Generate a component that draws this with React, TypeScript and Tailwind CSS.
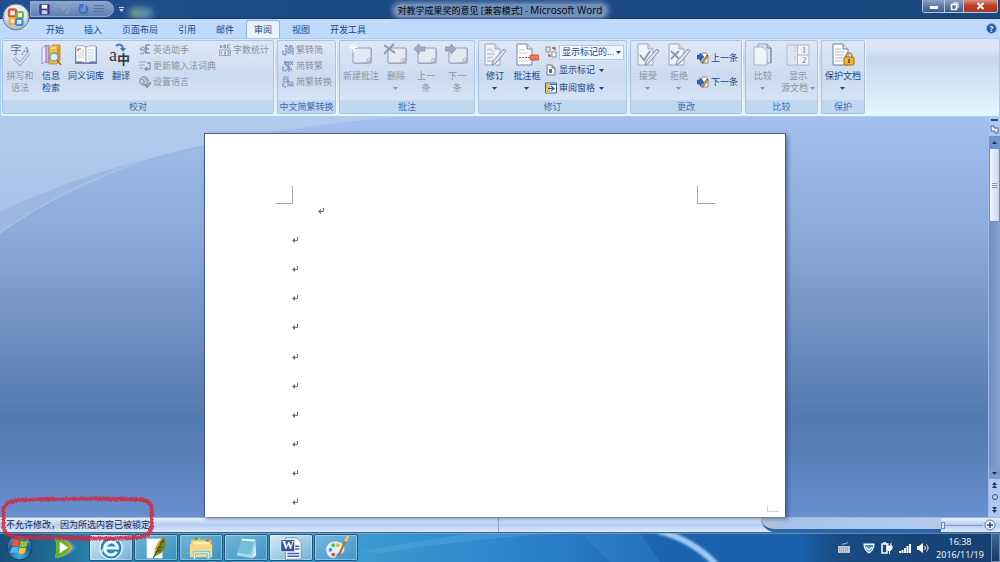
import { useState } from 'react';
import type { ReactNode } from 'react';

const TABS = ['开始', '插入', '页面布局', '引用', '邮件', '审阅', '视图', '开发工具'];

/* ---------- large ribbon icons, 24 x 24 ---------- */

const Icon24 = ({ children }: { children: ReactNode }) => (
  <svg viewBox="0 0 24 24" className="h-6 w-6 shrink-0" fill="none" aria-hidden="true">{children}</svg>
);

const Icon12 = ({ children }: { children: ReactNode }) => (
  <svg viewBox="0 0 12 12" className="h-3 w-3 shrink-0" fill="none" aria-hidden="true">{children}</svg>
);

const SpellingIcon = () => (
  <span className="relative flex h-6 w-6 items-start justify-center text-[#6f82a6]">
    <span className="text-[11px] leading-[13px] font-medium">字</span>
    <span className="font-['Liberation_Serif',serif] text-[13px] leading-[15px] italic">A</span>
    <svg viewBox="0 0 24 24" className="absolute inset-0" fill="none" aria-hidden="true">
      <path d="M6 15l6 6 9-11" stroke="#98a7c2" strokeWidth="3.5" />
      <path d="M6 15l6 6 9-11" stroke="#dfe6f1" strokeWidth="1.5" />
    </svg>
  </span>
);

const ResearchIcon = () => (
  <Icon24>
    <path d="M3 5l4-3v16l-4 3z" fill="#f3ecff" stroke="#8c7cb5" strokeWidth=".8" />
    <path d="M7 3l3-1v17l-3 1z" fill="#c8b8e6" stroke="#8c7cb5" strokeWidth=".8" />
    <path d="M10 5l4-3h7v15l-3 4h-8z" fill="#e9be3e" stroke="#a98317" strokeWidth=".8" />
    <path d="M18 5l3-3v15l-3 4z" fill="#c99a20" />
    <path d="M11 5h6" stroke="#fff1a8" />
    <circle cx="15" cy="14" r="4" fill="#d8efff" stroke="#8796aa" strokeWidth="1.3" />
    <path d="M18 17l4 5" stroke="#b06a34" strokeWidth="1.8" />
  </Icon24>
);

const ThesaurusIcon = () => (
  <Icon24>
    <path d="M1 4h22v17H1z" fill="#6d83aa" />
    <path d="M2 3c4-1 7 0 10 1v16c-3-1-6-2-10-1z" fill="#fff" stroke="#7b8eae" strokeWidth=".7" />
    <path d="M22 3c-4-1-7 0-10 1v16c3-1 6-2 10-1z" fill="#f5f8fc" stroke="#7b8eae" strokeWidth=".7" />
    <path d="M4 6h3M4 6v2" stroke="#d44d3a" strokeWidth="1.2" />
    <path d="M7 8v7M9 6v9M5 10v6M14 7h6M14 10h6M14 13h6M14 16h6" stroke="#b9c5d7" strokeWidth=".8" />
  </Icon24>
);

const TranslateIcon = () => (
  <span className="relative flex h-6 w-6 items-center text-[#33373f]">
    <span className="font-['Liberation_Serif',serif] text-[18px] leading-[14px]">a</span>
    <span className="pt-2 text-[13px] leading-[14px] font-bold">中</span>
    <svg viewBox="0 0 24 24" className="absolute inset-0" fill="none" aria-hidden="true">
      <path d="M7 3c3-3 7-1 7 3" stroke="#3c70c8" strokeWidth="1.8" />
      <path d="M11 5h6l-3 4z" fill="#3c70c8" />
    </svg>
  </span>
);

type CommentKind = 'new' | 'delete' | 'prev' | 'next';

const CommentIcon = ({ kind }: { kind: CommentKind }) => (
  <Icon24>
    <path d="M5 6h18v14l-1 1H5z" fill="#a9b6cb" />
    <path d="M4 5h18v11l-4 4H4z" fill="#e3eaf4" stroke="#8f9db6" />
    <path d="M22 16h-4v4z" fill="#fff" stroke="#8f9db6" strokeWidth=".8" />
    {kind === 'new' && <path d="M4.500 0v9M0 4.500h9M1 1l6 7M8 1L1 8" stroke="#fff" />}
    {kind === 'delete' && <path d="M0 2l11 8M10 1L0 11" stroke="#8b98af" strokeWidth="2" />}
    {kind === 'prev' && <path d="M0 6l5-5v3h6v4H5v3z" fill="#9eabc1" stroke="#7b8aa6" strokeWidth=".7" />}
    {kind === 'next' && <path d="M11 6L6 1v3H0v4h6v3z" fill="#9eabc1" stroke="#7b8aa6" strokeWidth=".7" />}
  </Icon24>
);

const PenDocIcon = ({ mark }: { mark?: 'check' | 'cross' }) => (
  <Icon24>
    <path d="M2 1h10l5 5v16H2z" fill="#eef3fa" stroke="#99a7bd" />
    <path d="M12 1v5h5" fill="#d5deec" stroke="#99a7bd" />
    {!mark && <path d="M4 7l3-1 4 3M4 11h8M4 15l6-1M4 18h7" stroke="#a5b1c6" />}
    {mark === 'check' && <path d="M4 12l4 5 6-9" stroke="#8b99b2" strokeWidth="2" />}
    {mark === 'cross' && <path d="M4 8l9 9M12 8l-8 8" stroke="#8b99b2" strokeWidth="1.8" />}
    <path d="M21 6l2 2-10 12-4 2 1-4z" fill="#d8e0ec" stroke="#8290aa" />
  </Icon24>
);

const BalloonIcon = () => (
  <Icon24>
    <path d="M2 1h10l5 5v16H2z" fill="#fff" stroke="#77849a" />
    <path d="M12 1v5h5" fill="#dfe6f0" stroke="#77849a" />
    <path d="M4 7h6M4 10h9M4 18h9" stroke="#c2cad6" />
    <path d="M4 14.500h11" stroke="#d8493a" strokeDasharray="2 1" />
    <rect x="15" y="12" width="9" height="5" rx="1" fill="#ef7a64" stroke="#b5402f" strokeWidth=".8" />
  </Icon24>
);

const CompareIcon = () => (
  <Icon24>
    <path d="M7 1h9l4 4v15H7z" fill="#d8e2f0" stroke="#93a3bd" />
    <path d="M3 4h9l4 4v14H3z" fill="#edf3fb" stroke="#a5b4cb" />
    <path d="M20 5v15M16 1v4h4" stroke="#71829f" />
  </Icon24>
);

const SourceIcon = () => (
  <span className="relative flex h-6 w-6 justify-end text-[#6f7886]">
    <svg viewBox="0 0 24 24" className="absolute inset-0" fill="none" aria-hidden="true">
      <path d="M1 2h22v20H1z" fill="#eff3f9" stroke="#a9b5c8" />
      <path d="M2 3h9v18H2z" fill="#dbe4f0" />
      <path d="M11.500 2v20M12 12h11" stroke="#a9b5c8" />
      <path d="M8 5h2M8 8h2M8 14h2M8 17h2" stroke="#b9c4d6" />
    </svg>
    <span className="relative flex w-3 flex-col items-center pt-[2px] font-['Liberation_Serif',serif] text-[9px] leading-[10px]">
      <span>1</span>
      <span>2</span>
    </span>
  </span>
);

const ProtectIcon = () => (
  <Icon24>
    <path d="M2 1h10l5 5v16H2z" fill="#fff" stroke="#6f7d95" />
    <path d="M12 1v5h5" fill="#dfe6f0" stroke="#6f7d95" />
    <path d="M4 6h6M4 9h10M4 12h9M4 15h8M4 18h8" stroke="#adb9ca" />
    <path d="M15 15v-2c0-4 6-4 6 0v2" stroke="#a88d50" strokeWidth="1.6" />
    <rect x="13" y="14" width="10" height="8" rx="1" fill="#f3b62f" stroke="#a36c12" />
    <path d="M18 16v4" stroke="#62400c" strokeWidth="1.5" />
  </Icon24>
);

/* ---------- small ribbon icons, 12 x 12 ---------- */

const AssistantIcon = () => (
  <Icon12>
    <path d="M7 1h4M7 1v8h4M7 5h3" stroke="#7c8ca9" strokeWidth="1.5" />
    <path d="M1 6c2-5 5-3 5 0s-3 5-5 3M1 6h4" stroke="#9aa8c0" strokeWidth="1.5" />
  </Icon12>
);

const UpdateIcon = () => (
  <Icon12>
    <path d="M0 2h7M0 5h6M0 8h4" stroke="#9aa8bd" />
    <path d="M8 3h3v6H6M8 7L6 9l2 2" stroke="#8090ac" strokeWidth="1.3" />
  </Icon12>
);

const LanguageIcon = () => (
  <Icon12>
    <circle cx="5" cy="5" r="4.3" fill="#c3cfe1" stroke="#8290ab" />
    <path d="M2 3l3 1v3L3 8M6 1l1 3h2" stroke="#8997b0" />
    <path d="M6 8l2 3 4-5" stroke="#74839f" strokeWidth="1.5" />
  </Icon12>
);

const CountIcon = () => (
  <Icon12>
    <path d="M1 4l1-3 1 3M5 1v3h1.500V1zM11 1H8.500v3H11" stroke="#8492ab" />
    <path d="M.5 6h11v5.500H.5z" fill="#e4eaf3" stroke="#99a6bb" />
    <path d="M2.500 7.500V10M5 8h1.500v2H5M8.500 7.500H10V10H8.500" stroke="#6e7e9b" strokeWidth=".9" />
  </Icon12>
);

const ConvertIcon = ({ kind }: { kind: 'toSimple' | 'toTrad' | 'both' }) => (
  <Icon12>
    <path d="M0 7c0 3 2 4 4 4M0 7l-1 2M0 7l2 1" stroke="#86a0d0" strokeWidth="1.4" />
    {kind === 'toSimple' && <path d="M3 2h3M4 1L3 3M7 2h4M8 1v2M4 4v7M5 4h6v7M6 6h3v3H6z" stroke="#6c81ad" />}
    {kind === 'toTrad' && (
      <path d="M3 1v4h4V2H3M8 1l3 4M11 1L8 5M2 3h5M4 6l4 1-3 2h5M7 9v3M4 11l1-1M10 11L9 10" stroke="#6c81ad" />
    )}
    {kind === 'both' && <path d="M1 1h6M1 3h5v3H2zM4 5h3M6 5v6M6 6h5v5M7.500 8h2v2h-2z" stroke="#7f91b6" />}
  </Icon12>
);

const DisplayIcon = () => (
  <Icon12>
    <path d="M1 1h4v5H1z" fill="#dfe6f0" stroke="#6b778c" strokeWidth=".8" />
    <path d="M7 6h4v5H7z" fill="#fff" stroke="#6b778c" strokeWidth=".8" />
    <path d="M7 2h3v2M4 8v2h2" stroke="#d0452f" strokeWidth="1.3" />
  </Icon12>
);

const MarkupIcon = () => (
  <Icon12>
    <path d="M2 1h5l3 3v7H2z" fill="#fff" stroke="#66748d" />
    <path d="M7 1v3h3" stroke="#66748d" />
    <path d="M4 5h3v4H4z" fill="#60708e" />
  </Icon12>
);

const PaneIcon = () => (
  <Icon12>
    <path d="M.5 1h11v10H.5z" fill="#fff" stroke="#3b5d9b" />
    <path d="M1 2h4v9H1z" fill="#e6bd52" />
    <path d="M5 2h6v1H5z" fill="#3b5d9b" />
    <path d="M3 6.500h5M6 4l3 2.500L6 9" stroke="#2450a0" strokeWidth="1.2" />
  </Icon12>
);

const ChangeIcon = ({ back }: { back?: boolean }) => (
  <Icon12>
    <path d="M5 1h4l2 2v8H4z" fill="#fff" stroke="#6d6a66" strokeWidth=".8" />
    <path d="M10 3l1 1-4 6-2 1 1-3z" fill="#e8a53a" stroke="#6b4517" strokeWidth=".7" />
    <path
      d={back ? 'M0 3h3V1l4 4-4 4V7H0z' : 'M0 4h3V2l4 4-4 4V8H0z'}
      fill="#3264b5"
      stroke="#193e80"
      strokeWidth=".5"
    />
  </Icon12>
);

const Caret = () => (
  <svg viewBox="0 0 5 3" className="h-[3px] w-[5px] shrink-0" aria-hidden="true">
    <path d="M0 0h5L2.500 3z" fill="currentColor" />
  </svg>
);

/* ---------- ribbon building blocks ---------- */

type LargeProps = {
  icon: ReactNode;
  lines: string[];
  width: string;
  disabled?: boolean;
  caret?: 'below' | 'inline';
};

function LargeButton({ icon, lines, width, disabled, caret }: LargeProps) {
  return (
    <button
      disabled={disabled}
      className={`flex shrink-0 flex-col items-center pt-[2px] whitespace-nowrap ${width} ${
        disabled ? 'text-[#8a93a3]' : 'text-[#1c4587]'
      }`}
    >
      {icon}
      <span className="mt-[3px] flex flex-col items-center leading-3">
        {lines.map((line, i) => (
          <span key={line} className="flex items-center gap-[2px]">
            {line}
            {caret === 'inline' && i === lines.length - 1 && <Caret />}
          </span>
        ))}
        {caret === 'below' && <span className="flex h-3 items-center"><Caret /></span>}
      </span>
    </button>
  );
}

type SmallProps = { icon: ReactNode; label: string; disabled?: boolean; caret?: boolean; height?: string };

function SmallButton({ icon, label, disabled, caret, height = 'h-4' }: SmallProps) {
  return (
    <button
      disabled={disabled}
      className={`flex items-center gap-[2px] whitespace-nowrap ${height} ${
        disabled ? 'text-[#8a93a3]' : 'text-[#1c4587]'
      }`}
    >
      {icon}
      <span>{label}</span>
      {caret && <span className="pl-[2px]"><Caret /></span>}
    </button>
  );
}

function Group({ title, width, children }: { title: string; width: string; children: ReactNode }) {
  return (
    <section
      className={`flex h-[74px] shrink-0 flex-col rounded-[2px] border border-[#a6c2e4] bg-linear-to-b from-[#dde8f6] via-[#cbdbef] to-[#dce9f8] shadow-[1px_0_0_#eef6ff] ${width}`}
    >
      <div className="flex flex-1 items-start">{children}</div>
      <h2 className="h-[13px] bg-[#c1d8f2] text-center leading-[13px] whitespace-nowrap text-[#3f6cab]">{title}</h2>
    </section>
  );
}

function Ribbon() {
  return (
    <div className="flex gap-[3px] rounded-[3px] border border-[#a9cdf0] bg-linear-to-b from-[#dbe7f6] from-10% via-[#c7d8ed] via-25% to-[#e4f7ff] px-px pt-px pb-[2px]">
      <Group title="校对" width="w-[272px]">
        <LargeButton icon={<SpellingIcon />} lines={['拼写和', '语法']} width="w-[34px]" disabled />
        <LargeButton icon={<ResearchIcon />} lines={['信息', '检索']} width="w-7" />
        <LargeButton icon={<ThesaurusIcon />} lines={['同义词库']} width="w-[42px]" />
        <LargeButton icon={<TranslateIcon />} lines={['翻译']} width="w-7" />
        <div className="flex w-20 flex-col pt-px pl-1">
          <SmallButton icon={<AssistantIcon />} label="英语助手" disabled />
          <SmallButton icon={<UpdateIcon />} label="更新输入法词典" disabled />
          <SmallButton icon={<LanguageIcon />} label="设置语言" disabled />
        </div>
        <div className="flex flex-col pt-px pl-1">
          <SmallButton icon={<CountIcon />} label="字数统计" disabled />
        </div>
      </Group>
      <Group title="中文简繁转换" width="w-[59px]">
        <div className="flex flex-col pt-px pl-1">
          <SmallButton icon={<ConvertIcon kind="toSimple" />} label="繁转简" disabled />
          <SmallButton icon={<ConvertIcon kind="toTrad" />} label="简转繁" disabled />
          <SmallButton icon={<ConvertIcon kind="both" />} label="简繁转换" disabled />
        </div>
      </Group>
      <Group title="批注" width="w-[136px]">
        <LargeButton icon={<CommentIcon kind="new" />} lines={['新建批注']} width="w-[42px]" disabled />
        <LargeButton icon={<CommentIcon kind="delete" />} lines={['删除']} width="w-7" disabled caret="below" />
        <LargeButton icon={<CommentIcon kind="prev" />} lines={['上一', '条']} width="w-8" disabled />
        <LargeButton icon={<CommentIcon kind="next" />} lines={['下一', '条']} width="w-[30px]" disabled />
      </Group>
      <Group title="修订" width="w-[149px]">
        <LargeButton icon={<PenDocIcon />} lines={['修订']} width="w-8" caret="below" />
        <LargeButton icon={<BalloonIcon />} lines={['批注框']} width="w-8" caret="below" />
        <div className="flex flex-col pt-[2px] pl-[2px]">
          <div className="flex h-[18px] items-center gap-[2px]">
            <DisplayIcon />
            <div className="relative flex items-center text-[#1c4587]">
              <select
                aria-label="显示以审阅"
                className="h-[15px] w-[65px] appearance-none border border-[#b3cbea] bg-[#f1f6fd] pl-[2px] leading-3 outline-none"
              >
                <option>显示标记的...</option>
              </select>
              <span className="pointer-events-none absolute right-[3px]"><Caret /></span>
            </div>
          </div>
          <SmallButton icon={<MarkupIcon />} label="显示标记" caret height="h-[18px]" />
          <SmallButton icon={<PaneIcon />} label="审阅窗格" caret height="h-[18px]" />
        </div>
      </Group>
      <Group title="更改" width="w-[112px]">
        <LargeButton icon={<PenDocIcon mark="check" />} lines={['接受']} width="w-[34px]" disabled caret="below" />
        <LargeButton icon={<PenDocIcon mark="cross" />} lines={['拒绝']} width="w-7" disabled caret="below" />
        <div className="flex flex-col pt-[5px] pl-1">
          <SmallButton icon={<ChangeIcon back />} label="上一条" height="h-6" />
          <SmallButton icon={<ChangeIcon />} label="下一条" height="h-6" />
        </div>
      </Group>
      <Group title="比较" width="w-[73px]">
        <LargeButton icon={<CompareIcon />} lines={['比较']} width="w-[34px]" disabled caret="below" />
        <LargeButton icon={<SourceIcon />} lines={['显示', '源文档']} width="w-9" disabled caret="inline" />
      </Group>
      <Group title="保护" width="w-[44px]">
        <LargeButton icon={<ProtectIcon />} lines={['保护文档']} width="w-[42px]" caret="below" />
      </Group>
    </div>
  );
}

/* ---------- window chrome ---------- */

function OfficeButton() {
  return (
    <button aria-label="Office 按钮" className="absolute top-[3px] left-[2px] z-10">
      <svg viewBox="0 0 28 28" className="h-7 w-7" fill="none">
        <defs>
          <radialGradient id="orb" cx=".5" cy=".35" r=".65">
            <stop offset="0" stopColor="#fff" />
            <stop offset=".6" stopColor="#dfe5ee" />
            <stop offset="1" stopColor="#9eabc2" />
          </radialGradient>
        </defs>
        <circle cx="14" cy="14" r="13" fill="url(#orb)" stroke="#6c80a4" />
        <rect x="7" y="6.500" width="7" height="7" rx="1.500" stroke="#e0562b" strokeWidth="2.400" />
        <rect x="15" y="9" width="6" height="6" rx="1.500" stroke="#7db83e" strokeWidth="2.200" />
        <rect x="7.500" y="15" width="6" height="6" rx="1.500" stroke="#f1a930" strokeWidth="2.200" />
        <rect x="14" y="16" width="6.500" height="6" rx="1.500" stroke="#3f8ad2" strokeWidth="2.200" />
      </svg>
    </button>
  );
}

function TitleBar() {
  return (
    <header className="relative flex h-[19px] items-start justify-between border-b border-[#16396a] bg-linear-to-r from-[#20508f] via-[#1e4a84] via-30% to-[#1b477f]">
      <div className="flex h-full items-center">
        <div className="ml-[30px] flex h-4 w-[84px] items-center gap-1 rounded-r-full border border-[#8fa9cc] bg-linear-to-b from-[#8ba5c9] to-[#5d80b3] pl-2">
          <button aria-label="保存">
            <svg viewBox="0 0 12 12" className="h-[11px] w-[11px]">
              <path d="M1 1h10v10H1z" fill="#4a3fa5" stroke="#2a2673" />
              <path d="M3 1h6v4H3z" fill="#fff" />
              <path d="M3 7h6v4H3z" fill="#c9cdea" />
            </svg>
          </button>
          <button aria-label="撤消" disabled className="ml-1">
            <svg viewBox="0 0 12 12" className="h-3 w-4" fill="none">
              <path d="M3 3v3h3M3 6c2-4 6-3 6 0s-2 4-4 4" stroke="#87a1c6" strokeWidth="1.5" />
            </svg>
          </button>
          <button aria-label="恢复">
            <svg viewBox="0 0 12 12" className="h-[11px] w-[11px]" fill="none">
              <path d="M3 2.500a4.300 4.300 0 1 0 5.500 0" stroke="#2f6bd0" strokeWidth="2" />
              <path d="M1 0h5v5z" fill="#2f6bd0" />
            </svg>
          </button>
          <button aria-label="列表" disabled>
            <svg viewBox="0 0 12 12" className="h-3 w-3">
              <path d="M1 2.500h10M1 5.500h10M1 8.500h10" stroke="#54719e" />
            </svg>
          </button>
        </div>
        <button aria-label="自定义快速访问工具栏" className="ml-1 flex flex-col items-center gap-px px-px text-[#c8d8ee]">
          <span className="h-px w-[5px] bg-[#c8d8ee]" />
          <Caret />
        </button>
        <div className="ml-1 h-[10px] w-6 self-end rounded-full bg-linear-to-r from-[#9fb78a]/80 to-[#6fb0d8]/70 blur-[3px]" />
      </div>
      <h1 className="pointer-events-none absolute inset-x-0 top-1 text-center leading-3 whitespace-nowrap text-black">
        <span className="rounded-full bg-[#a9c0e0]/60 px-1 shadow-[0_0_5px_2px_#a9c0e099]">
          对教学成果奖的意见 [兼容模式] -{' '}
          <span className="font-['Open_Sans',sans-serif] text-[10px]">Microsoft Word</span>
        </span>
      </h1>
      <div className="relative mr-[2px] flex h-[13px] overflow-hidden rounded-b-[3px] border border-t-0 border-[#b6c8e0]">
        <button aria-label="最小化" className="flex w-[22px] items-center justify-center border-r border-[#b6c8e0] bg-linear-to-b from-[#8aa1c3] to-[#36598c]">
          <span className="mt-[3px] h-[3px] w-2 bg-white" />
        </button>
        <button aria-label="还原" className="flex w-[19px] items-center justify-center border-r border-[#b6c8e0] bg-linear-to-b from-[#8aa1c3] to-[#36598c]">
          <svg viewBox="0 0 9 9" className="h-[9px] w-[9px]" fill="none">
            <path d="M3 1h5v5" stroke="#fff" />
            <rect x="1.500" y="2.500" width="5" height="5" stroke="#fff" strokeWidth="1.5" />
          </svg>
        </button>
        <button aria-label="关闭" className="flex w-[33px] items-center justify-center bg-linear-to-b from-[#d99080] via-[#bd3d29] via-45% to-[#a93a22]">
          <svg viewBox="0 0 9 8" className="h-2 w-[9px]">
            <path d="M1.500 1l6 6M7.500 1l-6 6" stroke="#fff" strokeWidth="2" />
          </svg>
        </button>
      </div>
    </header>
  );
}

function TabRow() {
  const [active, setActive] = useState('审阅');

  return (
    <nav className="flex h-[19px] items-end justify-between bg-[#bfdafd] pr-[3px] pl-[38px]">
      <div role="tablist" className="flex gap-1">
        {TABS.map((tab) => (
          <button
            key={tab}
            role="tab"
            aria-selected={tab === active}
            onClick={() => setActive(tab)}
            className={`h-[18px] rounded-t-[3px] border border-b-0 px-[7px] leading-4 text-[#1c4587] ${
              tab === active ? 'border-[#8db2e3] bg-[#eaf2fc]' : 'border-transparent'
            }`}
          >
            {tab}
          </button>
        ))}
      </div>
      <button aria-label="帮助" className="mb-1 flex h-[11px] w-[11px] items-center justify-center rounded-full border border-[#8cb3e0] bg-[#2456ae] text-[8px] leading-none font-bold text-white">
        ?
      </button>
    </nav>
  );
}

/* ---------- document area ---------- */

const ParagraphMark = () => (
  <svg viewBox="0 0 8 8" className="h-2 w-2" fill="none" aria-hidden="true">
    <path d="M6.500 1v3.500H2" stroke="#6f6f6f" />
    <path d="M4 2v5L1 4.500z" fill="#6f6f6f" />
  </svg>
);

function Page() {
  return (
    <main className="relative mx-auto mt-4 flex w-[582px] flex-col border border-b-0 border-[#4d5f80] bg-white shadow-[2px_2px_4px_#2d4a7d99]">
      <div className="mt-[52px] flex justify-between px-[70px]">
        <div className="h-[18px] w-[18px] border-r border-b border-[#a8a8a8]" />
        <div className="h-[18px] w-[18px] border-b border-l border-[#a8a8a8]" />
      </div>
      <div className="-mt-2 flex flex-1 flex-col px-[86px]">
        {Array.from({ length: 11 }, (_, i) => (
          <p key={i} className={`flex flex-1 items-center ${i === 0 ? 'pl-[26px]' : ''}`}>
            <ParagraphMark />
          </p>
        ))}
      </div>
      <div className="absolute right-[6px] bottom-[5px] h-[7px] w-3 border-b border-l border-[#d5d5d5]" />
    </main>
  );
}

function ScrollBar() {
  return (
    <aside className="flex w-3 shrink-0 flex-col items-center border-l border-[#9dbcf0] bg-[#b0c7f2] text-[#1d2f55]">
      <span className="mt-[2px] h-[2px] w-[7px] bg-[#2c4a7d]" />
      <button aria-label="标尺" className="mt-1">
        <svg viewBox="0 0 9 10" className="h-[10px] w-[9px]" fill="none">
          <path d="M1 1h3v2h4v5H5V6H1z" fill="#eef3fa" stroke="#53617a" />
        </svg>
      </button>
      <button aria-label="向上滚动" className="mt-px flex h-3 w-full items-center justify-center bg-[#6f94cd]">
        <span className="rotate-180"><Caret /></span>
      </button>
      <div className="flex w-full flex-1 flex-col bg-linear-to-r from-[#6f8dbf] to-[#84a3d0]">
        <div className="flex h-[74px] w-full flex-col items-center justify-center gap-px border border-[#6f8dbd] bg-linear-to-r from-[#f3f7fd] to-[#c9d6ec]">
          <span className="h-px w-[5px] bg-[#8494b0]" />
          <span className="h-px w-[5px] bg-[#8494b0]" />
          <span className="h-px w-[5px] bg-[#8494b0]" />
        </div>
      </div>
      <button aria-label="向下滚动" className="flex h-3 w-full items-center justify-center bg-[#7c9acb]"><Caret /></button>
      <button aria-label="前一页" className="flex h-3 flex-col items-center justify-center">
        <span className="rotate-180"><Caret /></span>
        <span className="rotate-180"><Caret /></span>
      </button>
      <button aria-label="选择浏览对象" className="flex h-3 items-center">
        <span className="h-[6px] w-[6px] rounded-full border border-[#334a74] bg-[#c4cfe3]" />
      </button>
      <button aria-label="下一页" className="flex h-[14px] flex-col items-center justify-center">
        <Caret />
        <Caret />
      </button>
    </aside>
  );
}

function Workspace() {
  return (
    <div className="relative flex flex-1 bg-[linear-gradient(to_bottom,#a3c0ee_0%,#8aabdb_29%,#7595c6_49%,#537ab0_75%,#5a80b8_84%,#6890d0_100%)] pl-[2px]">
      <svg viewBox="0 0 400 400" className="absolute top-0 left-0 h-full w-[400px]" preserveAspectRatio="none" aria-hidden="true">
        <defs>
          <linearGradient id="swoosh" x1="0" y1="0" x2="0" y2="1">
            <stop offset="0" stopColor="#b2cbee" />
            <stop offset="1" stopColor="#a9c3e8" />
          </linearGradient>
        </defs>
        <path d="M0 0H400C240 12 90 50 0 116z" fill="#9bb9e0" />
        <path d="M0 0H400C240 12 90 50 0 95z" fill="url(#swoosh)" />
        <path d="M0 116C60 73 130 44 204 25" stroke="#b3ccec" strokeWidth=".8" fill="none" />
      </svg>
      <Page />
      <ScrollBar />
    </div>
  );
}

function StatusBar() {
  return (
    <footer className="grid h-4 grid-cols-2 items-center border-t border-b border-t-[#aab6cb] border-b-[#45658e] bg-linear-to-b from-[#e8f1fd] via-[#b3cdf3] via-50% to-[#dfeafc] pr-1 text-[#10254e]">
      <p className="pl-[6px] whitespace-nowrap">不允许修改，因为所选内容已被锁定。</p>
      <div className="flex h-full items-center justify-end border-l border-[#8fabd6]">
        <div className="h-full w-[180px] rounded-bl-full border-b-[3px] border-[#2765ad] bg-linear-to-r from-[#c2c3c6] via-[#a6c2ea] via-12% to-[#b3cbef]" />
        <input
          type="range"
          aria-label="显示比例"
          defaultValue={0}
          className="h-[9px] w-[42px] appearance-none bg-linear-to-b from-transparent from-45% via-[#7f97bd] via-50% to-transparent to-60% [&::-webkit-slider-thumb]:h-[7px] [&::-webkit-slider-thumb]:w-1 [&::-webkit-slider-thumb]:appearance-none [&::-webkit-slider-thumb]:border [&::-webkit-slider-thumb]:border-[#7088b0] [&::-webkit-slider-thumb]:bg-[#dce8fa]"
        />
        <button aria-label="放大" className="ml-px">
          <svg viewBox="0 0 12 12" className="h-3 w-3">
            <circle cx="6" cy="6" r="5" fill="#eef4fd" stroke="#5b6f92" />
            <path d="M3 6h6M6 3v6" stroke="#2b4a80" strokeWidth="1.5" />
          </svg>
        </button>
      </div>
    </footer>
  );
}

/* ---------- taskbar ---------- */

const TaskIcon = ({ children }: { children: ReactNode }) => (
  <svg viewBox="0 0 28 28" className="h-[26px] w-[26px]" fill="none" aria-hidden="true">{children}</svg>
);

const TASKS = [
  {
    name: 'Internet Explorer',
    active: true,
    icon: (
      <TaskIcon>
        <circle cx="14" cy="14" r="12" fill="#2487cf" stroke="#e9f6ff" strokeWidth="1.5" />
        <path d="M20 18a7 7 0 1 1 1-4H8" stroke="#fff" strokeWidth="3" />
        <path d="M4 19C4 14 17 4 24 6" stroke="#dff1ff" strokeWidth="1.3" />
      </TaskIcon>
    ),
  },
  {
    name: '羽毛笔',
    icon: (
      <TaskIcon>
        <path d="M4 4h17v21H4z" fill="#fbfdf8" />
        <path d="M22 2c4 5 3 12-2 17l-7 4c-2-6 3-16 9-21z" fill="#6e8f28" />
        <path d="M22 2c-1 6-4 11-9 21-2-7 3-17 9-21z" fill="#e0a32b" />
        <path d="M22 4L11 25M15 14l6-1M14 18l6-2M18 8l5-1" stroke="#4d4418" strokeWidth="1.2" />
      </TaskIcon>
    ),
  },
  {
    name: '资源管理器',
    icon: (
      <TaskIcon>
        <path d="M3 5l9-2 2 2h11v18H3z" fill="#e6c160" />
        <path d="M5 7h18v14H5z" fill="#fff4b8" />
        <path d="M2 10h24v14H2z" fill="#f4db83" />
        <path d="M7 3h4v2H7z" fill="#4aa045" />
        <path d="M19 5h4v2h-4z" fill="#d15745" />
        <path d="M7 26v-7h15v7" stroke="#7bc6eb" strokeWidth="3.5" />
        <path d="M7 25v-6h15v6" stroke="#dff5ff" />
      </TaskIcon>
    ),
  },
  {
    name: '记事本',
    icon: (
      <TaskIcon>
        <path d="M10 4l14 1-3 20-17-3z" fill="#a7dcea" />
        <path d="M10 4l14 1-5 16-15-2z" fill="#72bfd6" />
        <path d="M10 4l14 1-1 2-14-1z" fill="#e8f8fc" />
        <path d="M24 5l-3 20 4-3z" fill="#d8eef5" />
      </TaskIcon>
    ),
  },
  {
    name: 'Word',
    active: true,
    icon: (
      <span className="relative flex h-[26px] w-[26px] items-center">
        <svg viewBox="0 0 28 28" className="absolute inset-0" fill="none" aria-hidden="true">
          <path d="M8 3h12l5 5v18H8z" fill="#fff" stroke="#6b86bb" />
          <path d="M18 12h5M18 15h5M10 20h13M10 23h13" stroke="#3d5fa6" strokeWidth="1.6" />
          <path d="M3 5h15v13H3z" fill="#2c53a3" stroke="#e2ecfb" />
        </svg>
        <span className="relative -mt-[5px] w-5 text-center font-['Liberation_Serif',serif] text-[12px] leading-3 font-bold text-white">W</span>
      </span>
    ),
  },
  {
    name: '画图',
    icon: (
      <TaskIcon>
        <path d="M3 16C3 9 10 5 17 7c6 2 8 8 5 12-2 2-4 0-6 1s-1 5-5 5c-5 0-8-5-8-9z" fill="#e3eef7" stroke="#88a4c0" />
        <circle cx="8" cy="16" r="2" fill="#4290d8" />
        <circle cx="11" cy="11" r="2" fill="#5bb05a" />
        <circle cx="16" cy="11" r="2" fill="#e6b33a" />
        <circle cx="11" cy="21" r="2" fill="#d0503e" />
        <path d="M26 2l-9 20" stroke="#b77331" strokeWidth="2.4" />
        <path d="M27 1l-3 6" stroke="#ecc48a" strokeWidth="3" />
      </TaskIcon>
    ),
  },
];

function Tray() {
  return (
    <div className="relative flex h-full items-center gap-[6px] text-white">
      <button aria-label="键盘" className="mr-[7px]">
        <svg viewBox="0 0 12 12" className="h-3 w-3" fill="none">
          <path d="M0 4h12v7H0z" fill="#c3c9d0" />
          <path d="M1 6h10M1 8h10M3 10h6" stroke="#7c8796" strokeWidth=".8" strokeDasharray="1 1" />
          <path d="M4 3c0-2 4 0 6-3" stroke="#c3c9d0" />
        </svg>
      </button>
      <button aria-label="安全卫士">
        <svg viewBox="0 0 12 12" className="h-3 w-3" fill="none">
          <path d="M.5 1.500h11c0 5-2 8-5.500 10C2.500 9.500.5 6.500.5 1.500z" fill="#fff" />
          <path d="M2 3h8c0 3-2 6-4 7C4 9 2 6 2 3z" fill="#2a8be0" />
          <path d="M3 5l3 3 3-3" stroke="#fff" strokeWidth="1.5" />
        </svg>
      </button>
      <button aria-label="电源">
        <svg viewBox="0 0 12 12" className="h-3 w-3" fill="none">
          <path d="M1 2h5v9H1zM2 1h3" stroke="#fff" strokeWidth="1.5" />
          <path d="M6 4h5v3L9 9H8L6 7zM7 4V1M10 4V1M8.500 9v3" fill="#fff" stroke="#fff" />
        </svg>
      </button>
      <button aria-label="网络">
        <svg viewBox="0 0 12 12" className="h-3 w-3">
          <path d="M0 11V9h2v2zM2.500 11V8h2v3zM5 11V6h2v5zM7.500 11V4h2v7zM10 11V2h2v9z" fill="#fff" />
        </svg>
      </button>
      <button aria-label="音量">
        <svg viewBox="0 0 12 12" className="h-3 w-3" fill="none">
          <path d="M0 4h2l4-3v10L2 8H0z" fill="#fff" />
          <path d="M7.500 4c1 1 1 3 0 4M9.500 2.500c2 2 2 5 0 7" stroke="#fff" />
        </svg>
      </button>
      <div className="flex w-[50px] flex-col items-center font-['Open_Sans',sans-serif] leading-[13px]">
        <time>16:38</time>
        <time>2016/11/19</time>
      </div>
      <button aria-label="显示桌面" className="h-full w-[9px] border border-[#6c8cb5] bg-linear-to-b from-[#3f6798] to-[#16375f]" />
    </div>
  );
}

function Taskbar() {
  return (
    <div className="relative flex h-[29px] items-center justify-between overflow-hidden bg-[#1c65ad]">
      <svg viewBox="0 0 1000 29" className="absolute inset-0 h-full w-full" preserveAspectRatio="none" aria-hidden="true">
        <defs>
          <linearGradient id="aero">
            <stop offset="0" stopColor="#164e78" />
            <stop offset=".1" stopColor="#2b85b0" />
            <stop offset=".35" stopColor="#3c9cd0" />
            <stop offset=".55" stopColor="#2a7fc9" />
            <stop offset=".66" stopColor="#1c65ad" />
            <stop offset=".8" stopColor="#1860ab" />
            <stop offset=".84" stopColor="#194a80" />
            <stop offset="1" stopColor="#173f70" />
          </linearGradient>
          <filter id="soft"><feGaussianBlur stdDeviation="1" /></filter>
        </defs>
        <path d="M0 0h1000v29H0z" fill="url(#aero)" />
        <path d="M380 20C430 12 500 4 560 0H470L360 18z" fill="#6dbbe2" opacity=".25" />
        <path d="M580 0h60l20 29h-50z" fill="#4292dc" opacity=".25" />
        <path d="M658-2c22 5 42 17 58 33" stroke="#9ccaf5" strokeWidth="6" fill="none" filter="url(#soft)" />
        <path d="M0 .5h1000" stroke="#7fb0d4" opacity=".6" />
      </svg>
      <div className="relative flex h-full items-center">
        <button aria-label="开始" className="ml-[6px]">
          <svg viewBox="0 0 28 28" className="h-[27px] w-[27px]">
            <defs>
              <radialGradient id="start" cx=".5" cy=".8" r=".8">
                <stop offset="0" stopColor="#4fb0e0" />
                <stop offset=".6" stopColor="#1d5a90" />
                <stop offset="1" stopColor="#6f9cc0" />
              </radialGradient>
            </defs>
            <circle cx="14" cy="14" r="13" fill="url(#start)" stroke="#143c62" />
            <path d="M7 7c3-2 5-1 7 0l-1 6c-3-1-5-1-7 0z" fill="#f0562a" />
            <path d="M15 7c3 1 5 1 8 0l-2 6c-2 1-5 1-7 0z" fill="#8cc63f" />
            <path d="M6 14c2-1 4-1 7 0l-1 6c-2-1-5-1-8 0z" fill="#55b7f2" />
            <path d="M14 14c2 1 5 1 7 0l-2 6c-2 1-4 1-6 0z" fill="#fcc92f" />
          </svg>
        </button>
        <button aria-label="播放器" className="mr-3 ml-[19px]">
          <svg viewBox="0 0 26 26" className="h-[25px] w-[25px]">
            <path d="M3 2c9 0 20 6 22 11-2 5-13 11-22 11 2-8 2-14 0-22z" fill="#2a97e0" />
            <path d="M3 2c8 0 16 6 19 11-3 5-11 11-19 11 2-8 2-14 0-22z" fill="#f3992c" />
            <path d="M3 2c7 1 14 6 16 11-2 5-9 10-16 11 2-8 2-14 0-22z" fill="#5eb62f" />
            <path d="M8 7l9 6-9 6z" fill="#fff" />
          </svg>
        </button>
        <div className="flex h-full items-stretch gap-px py-px">
          {TASKS.map((task) => (
            <button
              key={task.name}
              aria-label={task.name}
              className={`flex w-11 items-center justify-center rounded-[2px] border border-[#1f5680] shadow-[inset_0_0_0_1px_#ffffff59] ${
                task.active
                  ? 'bg-linear-to-br from-[#d5eaf6] to-[#6fb2d8]'
                  : 'bg-linear-to-br from-[#8fc6e2]/70 to-[#3d93c4]/60'
              }`}
            >
              {task.icon}
            </button>
          ))}
        </div>
      </div>
      <Tray />
    </div>
  );
}

/* hand-drawn red marker round the status message */
const Marker = () => (
  <svg viewBox="0 0 156 48" className="pointer-events-none absolute bottom-5 left-0 z-20 h-12 w-[156px]" fill="none" aria-hidden="true">
    <defs>
      <filter id="rough" x="-5%" y="-10%" width="110%" height="120%">
        <feTurbulence baseFrequency=".4" numOctaves="2" seed="4" />
        <feDisplacementMap in="SourceGraphic" scale="2" />
      </filter>
    </defs>
    <path
      d="M16 6C40 4 110 4 140 5c9 1 12 5 11 12v14c-1 8-3 11-12 12-30 2-80 0-118 0C7 42 3 39 3 31V17C3 10 7 7 16 6z"
      stroke="#d3283f"
      strokeWidth="4"
      opacity=".85"
      filter="url(#rough)"
    />
  </svg>
);

export default function App() {
  return (
    <div className="relative flex h-screen flex-col overflow-hidden bg-[#bfdafd] font-['Open_Sans','Noto_Sans_CJK_SC',sans-serif] text-[9px] leading-3">
      <OfficeButton />
      <TitleBar />
      <TabRow />
      <Ribbon />
      <Workspace />
      <StatusBar />
      <Taskbar />
      <Marker />
    </div>
  );
}
